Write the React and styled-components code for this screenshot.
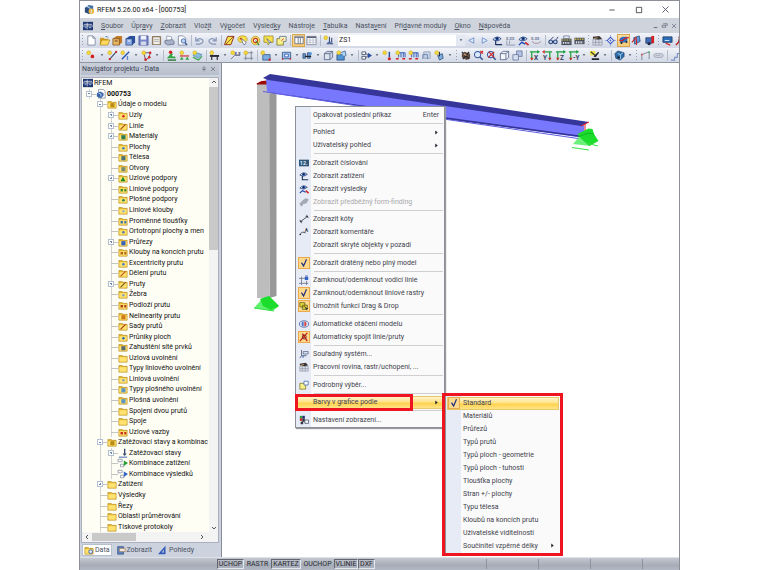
import React from 'react';

import styled, { createGlobalStyle, css } from 'styled-components';

const GlobalStyle = createGlobalStyle`
  * {
    box-sizing: border-box;
  }
  body {
    margin: 0;
    background: #fff;
    font-family: Roboto, "Noto Sans", sans-serif;
    font-size: 7px;
    color: #2b2b33;
  }
  button, select {
    font: inherit;
    color: inherit;
    border: 0;
    padding: 0;
    margin: 0;
    background: none;
  }
  ul {
    list-style: none;
    margin: 0;
    padding: 0;
  }
`;

/* ---------- icons ---------- */

const folder = (
  <>
    <path d="M1 3h4l1 1h5v7H1z" fill="#e3b62c" stroke="#a67c12" strokeWidth=".6" />
    <path d="M1.6 5h8.8v5.4H1.6z" fill="#ffe270" />
  </>
);
const eye = (
  <>
    <path d="M1 5Q5 0 10 4Q6 8 1 5z" fill="#dfe8f6" stroke="#223a72" strokeWidth=".9" />
    <circle cx="5.6" cy="4" r="2" fill="#2a55a8" />
    <circle cx="5.6" cy="4" r=".9" fill="#0c1430" />
  </>
);
const lens = (
  <>
    <circle cx="5" cy="5" r="3.4" fill="#dbe8fa" stroke="#33549a" strokeWidth="1.1" />
    <path d="M7.6 7.6l3 3" stroke="#33549a" strokeWidth="1.6" />
  </>
);
const spark = <circle cx="3" cy="3" r="2.1" fill="#f4d93a" stroke="#c3a11e" strokeWidth=".5" />;
const cube = color => (
  <>
    <path d="M1.5 4l3-2.5h6V8l-3 2.5h-6z" fill={color} />
    <path d="M1.5 4h6v6.5h-6z" fill="#fff" fillOpacity=".35" stroke="#35466e" strokeWidth=".7" />
    <path d="M1.5 4l3-2.5h6V8l-3 2.5M7.5 4l3-2.5" fill="none" stroke="#35466e" strokeWidth=".7" />
  </>
);
const axis = (letter, left) => (
  <>
    <path d={left ? 'M11 2H3M8.5 2v9' : 'M1 2h9M3 2v9'} stroke="#18a03c" strokeWidth="1.3" />
    <path d={left ? 'M3 0v4L0 2z' : 'M9 0v4l3-2z'} fill={left ? '#d42a2a' : '#18a03c'} />
    <path d={left ? 'M6.7 8.5h3.6L8.5 11.5z' : 'M1.2 8.5h3.6L3 11.5z'} fill="#d42a2a" />
    <text x={left ? 1 : 5.5} y="10.5" fontSize="7" fontWeight="700" fill="#333e5c">{letter}</text>
  </>
);

const GLYPHS = {
  app: (
    <>
      <path d="M1 4l4-3 5 1v6l-4 3-5-2z" fill="#4573a8" />
      <path d="M1 4l5 1v6L1 9z" fill="#2c4c7c" />
      <circle cx="8" cy="8" r="3" fill="#eab43b" />
      <path d="M3 2l4 3M8 6v4" stroke="#e7eef8" />
    </>
  ),
  rfem: (
    <>
      <path d="M0 1h12v10H0z" fill="#1c3470" />
      <path d="M0 6h12M5 2v8M1 4h10" stroke="#fff" strokeWidth=".8" />
      <path d="M2 8h2M7 8h3" stroke="#9eb6e8" strokeWidth="1.2" />
    </>
  ),
  doc: (
    <>
      <path d="M2 1h5.5L10 3.5V11H2z" fill="#fff" stroke="#6c7894" strokeWidth=".8" />
      <path d="M7.5 1v2.5H10" fill="none" stroke="#6c7894" strokeWidth=".8" />
    </>
  ),
  model: (
    <>
      <path d="M3 0.5h6L11 3v8H3z" fill="#fff" stroke="#6c7894" strokeWidth=".8" />
      <path d="M1 5l4-2 4 2v3L6 11 1 9z" fill="#3764a6" />
      <path d="M3 5l3 1v3" fill="none" stroke="#d4e2f8" />
    </>
  ),
  open: (
    <>
      <path d="M1 3h4l1 1h4v6H1z" fill="#d49f24" />
      <path d="M3 5.5h9L9.5 11H1z" fill="#ffd85c" stroke="#9a7414" strokeWidth=".6" />
      <path d="M7 2q2-1.5 3 1" fill="none" stroke="#3e6cb0" strokeWidth=".9" />
    </>
  ),
  boxOrange: (
    <>
      <path d="M1 4l4-3h6v7l-3 3H1z" fill="#c07a28" />
      <path d="M1 4h7v7H1z" fill="#e9b565" stroke="#6e4210" strokeWidth=".7" />
      <path d="M3 6.5h3" stroke="#5f390d" />
    </>
  ),
  boxBlue: (
    <>
      <path d="M1 4l4-3h6v7l-3 3H1z" fill="#2a4f9e" />
      <path d="M1 4h7v7H1z" fill="#86a9e4" stroke="#1c3470" strokeWidth=".7" />
      <path d="M3 6.5h3" stroke="#fff" />
    </>
  ),
  save: (
    <>
      <path d="M1 1h10v10H1z" fill="#7684c8" stroke="#3b4890" strokeWidth=".7" />
      <path d="M3 1h6v4H3z" fill="#f0f3fc" />
      <path d="M3 7h6v4H3z" fill="#d2d6ea" />
    </>
  ),
  clip: (
    <>
      <rect x="1" y="1" width="10" height="10" rx="1" fill="#8f7b62" />
      <path d="M2.5 2.5h7v7.5h-7z" fill="#f2f0ea" />
      <path d="M3.5 5h5M3.5 7h5" stroke="#8e8e8e" strokeWidth=".7" />
    </>
  ),
  print: (
    <>
      <path d="M3 1l5 1 1 4H3z" fill="#fff" stroke="#74809c" strokeWidth=".7" />
      <path d="M1 6l8-1 2 2v3l-7 1-3-2z" fill="#a7b1c6" stroke="#566180" strokeWidth=".7" />
    </>
  ),
  preview: (
    <>
      <path d="M1.5 1H7l2.5 2.5V11h-8z" fill="#fff" stroke="#6c7894" strokeWidth=".8" />
      <circle cx="7" cy="6.5" r="2.4" fill="#b8d2f4" stroke="#33549a" strokeWidth=".8" />
      <path d="M8.7 8.5l2.3 2.5" stroke="#33549a" strokeWidth="1.4" />
    </>
  ),
  undo: <path d="M2 2.5v4h4M2.3 6.2Q6 2 9.5 5.5Q11 8.5 6 10H2" fill="none" stroke="#8695b8" strokeWidth="1.3" />,
  redo: <path d="M10 2.5v4H6M9.7 6.2Q6 2 2.5 5.5Q1 8.5 6 10h4" fill="none" stroke="#8695b8" strokeWidth="1.3" />,
  plane: (
    <>
      <path d="M4 1.5h7l-3.5 9h-7z" fill="#f4e34c" stroke="#8a2d1c" strokeWidth="1" />
      <path d="M2 10L10 2" stroke="#8a2d1c" strokeWidth=".8" />
    </>
  ),
  eraser: (
    <>
      <ellipse cx="6" cy="4.5" rx="5" ry="3.6" fill="#f6e04a" stroke="#b08a1c" strokeWidth=".7" />
      <path d="M5 4l5 4-2 3-2-3z" fill="#fff" stroke="#40507c" strokeWidth=".7" />
      <circle cx="4" cy="4" r="1" fill="#cf3226" />
    </>
  ),
  target: (
    <>
      <circle cx="6" cy="6" r="4.6" fill="#f8e45a" stroke="#b08a1c" strokeWidth=".7" />
      <circle cx="6" cy="6" r="2.3" fill="#fff" stroke="#cf3226" strokeWidth="1.2" />
      <path d="M6 6l4 5" stroke="#3b8a35" strokeWidth="1.3" />
    </>
  ),
  note: (
    <>
      <path d="M1 1h10v7H7l-1 3-2-3H1z" fill="#f6e04a" stroke="#867a22" strokeWidth=".7" />
      <path d="M4 4l5 4-2.5.5z" fill="#fff" stroke="#40507c" strokeWidth=".7" />
    </>
  ),
  selectBox: (
    <>
      <path d="M1 4h7v7H1z" fill="#f8ef86" stroke="#6f6820" strokeWidth=".8" />
      <path d="M4 4V1.5h7V7H8" fill="#fff6b4" stroke="#4d6384" strokeWidth=".8" />
      <path d="M6 6l2.5-2" stroke="#cf3226" />
    </>
  ),
  columns: (
    <>
      <path d="M1 1.5h10v9H1z" fill="#fff" stroke="#555e72" strokeWidth=".9" />
      <path d="M1 3h10M5 3v7.5M7.6 3v7.5" stroke="#555e72" strokeWidth=".9" />
    </>
  ),
  grid: (
    <>
      <path d="M1 1.5h10v9H1z" fill="#fff" stroke="#6c7488" strokeWidth=".8" />
      <path d="M1 2.5h10" stroke="#555e72" strokeWidth="1.6" />
      <path d="M1 5.5h10M1 8h10M4.3 3v7.5M7.7 3v7.5" stroke="#a2aabc" strokeWidth=".7" />
    </>
  ),
  loadNew: (
    <>
      {spark}
      <path d="M7 2v6M9.5 3v5M4 9.5h7" stroke="#35446c" strokeWidth="1.1" />
      <path d="M5 8h5" stroke="#2d58b0" strokeWidth="1" />
    </>
  ),
  prev: <path d="M8.5 3L3 6l5.500 3z" fill="#dce8fb" stroke="#6a8bcc" strokeWidth=".9" />,
  next: <path d="M3.500 3L9 6 3.500 9z" fill="#dce8fb" stroke="#6a8bcc" strokeWidth=".9" />,
  viewLoad: (
    <>
      {eye}
      <path d="M4 6v5M4 10.500h7" stroke="#1d3160" strokeWidth="1.3" />
    </>
  ),
  values: (
    <>
      <text x="1" y="5" fontSize="5" fontWeight="700" fill="#75809a">x.xx</text>
      <path d="M2 6v5h9M5 6v4" stroke="#8893ad" strokeWidth=".9" fill="none" />
    </>
  ),
  viewResult: (
    <>
      {eye}
      <path d="M1 11l3-3 4 2" stroke="#1e48b4" strokeWidth="1.4" fill="none" />
      <path d="M8 8l3.500 3" stroke="#d42222" strokeWidth="1.8" />
    </>
  ),
  resultValues: (
    <>
      <text x="0" y="5" fontSize="5" fontWeight="700" fill="#75809a">x.xx</text>
      <path d="M1 7l3 2h4l3-2" stroke="#a98c94" strokeWidth="1" fill="none" />
    </>
  ),
  glasses: (
    <>
      <circle cx="3" cy="7.500" r="2" fill="#bed0ef" stroke="#273d70" strokeWidth="1.2" />
      <circle cx="8" cy="7.500" r="2" fill="#bed0ef" stroke="#273d70" strokeWidth="1.2" />
      <path d="M3 5l3-3M9 5l2-3" stroke="#273d70" />
    </>
  ),
  calc: (
    <>
      <path d="M3 1h6v3H3z" fill="#e8edf8" stroke="#57617c" strokeWidth=".7" />
      <path d="M.5 4h11v7H.5z" fill="#474d5a" />
      <path d="M1 5.500h10" stroke="#e9d44d" strokeWidth="1.2" strokeDasharray="1.600 1" />
      <path d="M2 8.500h8" stroke="#dfe4ee" strokeWidth="2" strokeDasharray="1.500 1" />
    </>
  ),
  calcAll: (
    <>
      <path d="M.5 3h11v7H.5z" fill="#474d5a" />
      <path d="M1 4.500h10" stroke="#e9d44d" strokeWidth="1.2" strokeDasharray="1.600 1" />
      <path d="M2 8h8" stroke="#dfe4ee" strokeWidth="2.400" strokeDasharray="1.500 1" />
    </>
  ),
  table: (
    <>
      <path d="M1 5h10v6H1z" fill="#dadee8" stroke="#777f92" strokeWidth=".6" />
      <path d="M1 8h10M4 5v6M7.500 5v6" stroke="#777f92" strokeWidth=".6" />
      <path d="M1 2l7-1 3 3-4 1-6-1z" fill="#3c3632" />
      <path d="M2 4l4-1" stroke="#caa477" />
    </>
  ),
  snap: (
    <>
      <path d="M6 0v12M0 6h12" stroke="#8b98c0" strokeWidth=".8" />
      <path d="M6 2.500L9.500 6 6 9.500 2.500 6z" fill="#fff" stroke="#3954c6" strokeWidth="1.1" />
      <circle cx="6" cy="6" r="1" fill="#3954c6" />
    </>
  ),
  car: (
    <>
      <path d="M1 4l3-2h6v5l-3 2H1z" fill="#2c6fc0" />
      <path d="M0 6l4 1 3-3 5-1" fill="none" stroke="#d42222" strokeWidth="1.400" />
      <circle cx="3" cy="9.500" r="1.300" fill="#222a40" />
      <circle cx="9" cy="8.500" r="1.300" fill="#222a40" />
    </>
  ),
  carPlane: (
    <>
      <path d="M3 3l6-2 1 6-6 3z" fill="#5d9adb" stroke="#284676" strokeWidth=".8" />
      <path d="M1 8l5-6M6 11V4" stroke="#d42222" strokeWidth="1.200" />
    </>
  ),
  carBox: (
    <>
      <path d="M2 3h7v6H2z" fill="#3f6eb6" stroke="#21345e" strokeWidth=".8" />
      <path d="M8 1h3v8H8z" fill="#d42222" />
      <path d="M4 8h3v3H4z" fill="#222a40" />
    </>
  ),
  screen: (
    <>
      <path d="M1 2h10v6H1z" fill="#2b6eb8" stroke="#1b3158" strokeWidth=".8" />
      <path d="M3 6h5" stroke="#dcebff" />
      <path d="M4 9l5 2" stroke="#d42222" strokeWidth="1.400" />
    </>
  ),
  node: (
    <>
      {spark}
      <circle cx="7" cy="7" r="2" fill="#d42222" />
    </>
  ),
  line: (
    <>
      {spark}
      <path d="M3 10L10 2" stroke="#35446c" strokeWidth="1.100" />
      <circle cx="3" cy="10" r="1.200" fill="#d42222" />
      <circle cx="10" cy="2" r="1.200" fill="#d42222" />
    </>
  ),
  member: (
    <>
      {spark}
      <path d="M2 10L10 2" stroke="#2956b4" strokeWidth="1.600" />
      <text x="7" y="11" fontSize="6" fontWeight="700" fill="#2956b4">I</text>
    </>
  ),
  polygon: (
    <>
      <path d="M3 3h7l-1 5-4 3z" fill="none" stroke="#5c3c4c" strokeWidth=".9" />
      {spark}
      <circle cx="10" cy="3" r="1.400" fill="#d42222" />
      <circle cx="9" cy="8" r="1.400" fill="#d42222" />
      <circle cx="5" cy="10.500" r="1.400" fill="#d42222" />
    </>
  ),
  support: (
    <>
      <path d="M6 3l5 6H1z" fill="#34a546" />
      <path d="M2 11h9" stroke="#1c6b2a" strokeWidth="1.400" />
      <circle cx="5" cy="2.500" r="1.900" fill="#d42222" />
      <circle cx="8" cy="6" r="1.100" fill="#fff" />
    </>
  ),
  supportLine: (
    <>
      {spark}
      <path d="M1 6.500h10" stroke="#d42222" strokeWidth="1.200" />
      <path d="M3 7l2 3.500H1zM9 7l2 3.500H7z" fill="#34a546" />
    </>
  ),
  surface: (
    <>
      <path d="M1 6l4-3 6 2-4 4z" fill="#8bbde2" stroke="#4a7ba8" strokeWidth=".7" />
      <path d="M1 8l6 3 4-4" fill="none" stroke="#34a546" strokeWidth="1.200" />
      {spark}
    </>
  ),
  hinge: (
    <>
      {spark}
      <path d="M1 5.500h10v2H1z" fill="#20242e" />
      <path d="M3 7v4M9 7v4" stroke="#20242e" strokeWidth="1.200" />
    </>
  ),
  dim: (
    <>
      {spark}
      <path d="M1 10l4-4h6" fill="none" stroke="#5d6880" strokeWidth=".9" />
      <text x="5" y="5" fontSize="5" fontWeight="700" fill="#404b66">x.x</text>
    </>
  ),
  gridLines: (
    <>
      <path d="M3 1v10M9 1v10M1 3h10M1 9h10" stroke="#7e8698" strokeWidth="1" />
      {spark}
    </>
  ),
  solid: (
    <>
      <path d="M3 5h8v6H3z" fill="#7baede" stroke="#2d5184" strokeWidth=".8" />
      {spark}
      <circle cx="10.500" cy="10.500" r="1.300" fill="#d42222" />
    </>
  ),
  opening: (
    <>
      <path d="M1.500 2.500h9v7h-9z" fill="#a9c8ea" stroke="#2d5184" strokeWidth=".9" />
      <path d="M4 4.500h4v3H4z" fill="#fff" stroke="#2956b4" strokeWidth=".9" />
      <path d="M1 9h1.500v1.500H1zM9.500 9H11v1.500H9.500z" fill="#d42222" />
    </>
  ),
  coupling: (
    <>
      <path d="M1 4h3v5H1zM6 3h3v6H6z" fill="#6a96cc" stroke="#2d4670" strokeWidth=".8" />
      <path d="M3 7h7" stroke="#20242e" strokeWidth="1.300" />
      <circle cx="9.500" cy="4" r="1.500" fill="#5aa0e0" />
    </>
  ),
  cubeGrey: cube('#ccd6e6'),
  boxPlus: (
    <>
      <path d="M1 5h8v6H1z" fill="#4f94d4" stroke="#24467c" strokeWidth=".8" />
      <path d="M5 3l5-2 1 5-2 1" fill="#aed2f2" stroke="#24467c" strokeWidth=".7" />
      {spark}
    </>
  ),
  combo: (
    <>
      <path d="M1 2h4v3H1zM1 7h4v3H1z" fill="#fff" stroke="#404b66" strokeWidth=".9" />
      <path d="M5 3.500l3 2.500-3 2.500" fill="none" stroke="#404b66" />
      <path d="M7.500 3L12 6 7.500 9z" fill="#2a4f9e" />
    </>
  ),
  loadNode: (
    <>
      {spark}
      <path d="M8 2v6" stroke="#2a4f9e" strokeWidth="1.600" />
      <circle cx="8" cy="9.500" r="1.700" fill="#d42222" />
    </>
  ),
  loadLine: (
    <>
      <path d="M2 3h9v5M4 3v5M6.500 3v5M9 3v5" fill="none" stroke="#2956b4" strokeWidth="1" />
      <path d="M1 9.500h10" stroke="#d42222" strokeWidth="1.500" strokeDasharray="3 4" />
      {spark}
    </>
  ),
  loadGen: (
    <>
      <path d="M3 2h7v7H3z" fill="#c7d4e6" stroke="#8896b0" strokeWidth=".8" />
      <path d="M2 10V5h5v5" fill="none" stroke="#6883b4" />
    </>
  ),
  loadFree: (
    <>
      {spark}
      <path d="M4 6l5-2 1 5-4 2z" fill="#7badde" stroke="#2b4776" strokeWidth=".8" />
      <path d="M6 2v5" stroke="#20242e" />
    </>
  ),
  hand: (
    <>
      <path d="M2 4l3-2 6 2v5l-4 2-5-3z" fill="#62493c" />
      <path d="M2 2l8 8M10 2L3 10" stroke="#20242e" strokeWidth="1.100" />
      <path d="M4 4l3 2" stroke="#dba67c" strokeWidth="1.300" />
    </>
  ),
  zoomWin: (
    <>
      {lens}
      <path d="M8 1l3 3M11 1L8 4" stroke="#d42222" strokeWidth="1.200" />
    </>
  ),
  zoomCross: (
    <>
      {lens}
      <path d="M2.500 8L9 2M3 2l6 6" stroke="#d42222" strokeWidth="1.300" />
    </>
  ),
  cubeWire: cube('#eef2fa'),
  cubes: (
    <>
      <path d="M5 1h6v6H5z" fill="#b7c3e0" stroke="#5f6e98" strokeWidth=".8" />
      <path d="M1 5h6v6H1z" fill="#d8dff0" stroke="#5f6e98" strokeWidth=".8" />
    </>
  ),
  axisX: axis('X'),
  axisY: axis('Y', true),
  axisZ: axis('Z'),
  axisMinusY: axis('-Y'),
  render: (
    <>
      <path d="M1 1h6v5H1z" fill="#f4e34c" />
      <path d="M3 9h8v2H3zM5 7l5-5 1 1-4 5z" fill="#20242e" />
      <path d="M2 2l6 5" stroke="#20242e" strokeWidth="1.300" />
    </>
  ),
  solidBlue: (
    <>
      <path d="M1 4l3-3 7 2v4l-4 4-5-2z" fill="#2f6ca8" stroke="#193a64" strokeWidth=".7" />
      <path d="M4 4l3 1 3-2M7 5v5" fill="none" stroke="#9fd0f2" />
      <circle cx="5" cy="8" r="1.300" fill="#123" />
    </>
  ),
  frame: (
    <>
      <path d="M2 11V5l8-3v8" fill="none" stroke="#7c8698" strokeWidth="1" />
      <circle cx="2" cy="5" r="1.100" fill="#d06060" />
      <circle cx="10" cy="2.500" r="1.100" fill="#58b070" />
    </>
  ),
  brick: (
    <>
      <rect x="1" y="4" width="10" height="4" rx="2" fill="#d6d9e2" stroke="#8a92a6" strokeWidth=".8" />
      <path d="M3 6h6" stroke="#8a92a6" strokeDasharray="1 1" />
    </>
  ),
  stairs: <path d="M1 11h4V8h3V4h3" fill="none" stroke="#7d93c8" strokeWidth="1.200" />,
  numbering: (
    <>
      <path d="M0 2h12v8H0z" fill="#2f5578" />
      <text x="1" y="8.500" fontSize="6.500" fontWeight="700" fill="#dff0ff">12.</text>
    </>
  ),
  formFinding: <path d="M1 8l4-4 3-2 3 1-2 4-4 1-2 3z" fill="#a5abb8" stroke="#8a909e" strokeWidth=".7" />,
  dims: (
    <>
      <path d="M2 9l8-6" stroke="#333a4c" strokeWidth="1" />
      <path d="M1 7l2 4M9 1l2 4M4 9l-3 0M8 3h3" stroke="#333a4c" strokeWidth="1" />
    </>
  ),
  comments: (
    <>
      <path d="M1 9l3-3 4 1" fill="none" stroke="#333a4c" strokeWidth="1" />
      <circle cx="1.500" cy="9" r="1" fill="#333a4c" />
      <text x="7" y="6.500" fontSize="6" fontWeight="700" fill="#333a4c">A</text>
    </>
  ),
  check: <path d="M3 5.500l2.500 4L9 1.500" fill="none" stroke="#1b2a80" strokeWidth="1.400" />,
  guides: (
    <>
      <path d="M3 2v10M0 4h8M0 10h11M9 7v5" stroke="#6d7688" strokeWidth="1" />
      <path d="M7 2h4v4H7z" fill="#2f64c4" />
      <path d="M8 2V.8h2V2" fill="none" stroke="#5f6e98" strokeWidth=".8" />
    </>
  ),
  drag: (
    <>
      <path d="M1 2h6v5H1zM4 5h6v5H4z" fill="#e8dc3c" stroke="#5d5514" strokeWidth=".9" />
      <path d="M7 7l4 2-1.500.8L8.500 11z" fill="#30343e" />
    </>
  ),
  rotate: (
    <>
      <ellipse cx="6" cy="6" rx="5.500" ry="3.800" fill="#e7eefa" stroke="#5272ac" strokeWidth="1.100" />
      <path d="M6 3c2 0 3 1.500 3 3s-1 3-3 3z" fill="#d23a3a" />
      <path d="M6 3c-2 0-3 1.500-3 3s1 3 3 3z" fill="#4a74c0" />
      <path d="M6 3v6" stroke="#fff" strokeWidth=".8" />
    </>
  ),
  connect: (
    <>
      <path d="M1 11L10 1M4 2l6 9" stroke="#c01c1c" strokeWidth="1.500" />
      <circle cx="6.300" cy="6" r="2.400" fill="none" stroke="#70201c" strokeWidth="1" />
    </>
  ),
  coords: (
    <>
      <path d="M3 1v7h6M3 8l-2 3" stroke="#4a5878" strokeWidth="1" fill="none" />
      <path d="M5 3h6v3H5z" fill="#d6e0f2" stroke="#4a5878" strokeWidth=".8" />
      <circle cx="5" cy="9.500" r="1.300" fill="#7b95cc" />
    </>
  ),
  detailSelect: (
    <>
      <path d="M1 4h7v7H1z" fill="#f8ef86" stroke="#6f6820" strokeWidth=".8" />
      <path d="M6 1.500h5V6H6z" fill="#fff" stroke="#3e62a8" strokeWidth=".9" />
    </>
  ),
  settings: (
    <>
      <path d="M1 1h3v3H1z" fill="#2d9c38" />
      <path d="M4 1h3v3H4z" fill="#1b2a80" />
      <path d="M1 4h3v3H1z" fill="#c82222" />
      <path d="M4 4h3v4H4zM2 8h3v3H2z" fill="#30343e" />
      <path d="M7 6h4.500v4H7z" fill="#fff" stroke="#404b66" strokeWidth=".9" />
    </>
  ),
  loadCase: (
    <>
      <path d="M8 1v6" stroke="#35446c" strokeWidth="1.600" />
      <path d="M5.500 6.500h5L8 9.500z" fill="#35446c" />
      <path d="M1 11h10" stroke="#4468b0" strokeWidth="1.200" />
    </>
  ),
  comboGreen: (
    <>
      <path d="M0 1.500h5v3H0zM3 7.500h4v3H3z" fill="#fff" stroke="#747d90" strokeWidth=".8" />
      <path d="M7 3L12 6 7 9.500z" fill="#22a032" />
    </>
  ),
  comboBlue: (
    <>
      <path d="M0 1.500h5v3H0zM3 7.500h4v3H3z" fill="#fff" stroke="#747d90" strokeWidth=".8" />
      <path d="M7 3L12 6 7 9.500z" fill="#2f64c4" />
    </>
  ),
  tabData: (
    <>
      {folder}
      <circle cx="8" cy="8" r="2.300" fill="#dbe8fa" stroke="#33549a" strokeWidth="1" />
    </>
  ),
  tabShow: (
    <>
      <path d="M2 2h7v9H2z" fill="#5f86c4" stroke="#2c4878" strokeWidth=".8" />
      <path d="M4 4h7v4H4z" fill="#f1e9dc" stroke="#8f6442" strokeWidth=".7" />
    </>
  ),
  tabViews: <path d="M0 11L9 1v10zM4.500 9H7V5.500z" fill="#3159b8" fillRule="evenodd" />,
  pin: <path d="M4 2h4v5H4zM3 7h6M6 7v4" fill="none" stroke="#5a6172" strokeWidth="1" />,
  close: <path d="M2 2l8 8M10 2l-8 8" stroke="#50576a" strokeWidth="1.200" />,
  minimize: <path d="M2 6h8" stroke="#333" strokeWidth="1.200" />,
  maximize: <path d="M2 2h8v8H2z" fill="none" stroke="#333" strokeWidth="1.200" />,
  mdiMin: <path d="M3 9.500h6" stroke="#50576a" strokeWidth="1.400" />,
  mdiRestore: <path d="M2 5.500h6v3.500H2zM4 3h6.500v4" fill="none" stroke="#50576a" strokeWidth="1.100" />,
  arrowUp: <path d="M2 8l4-4 4 4" fill="none" stroke="#444" strokeWidth="1.800" />,
  arrowDown: <path d="M2 4l4 4 4-4" fill="none" stroke="#444" strokeWidth="1.800" />,
  arrowLeft: <path d="M8 2L4 6l4 4" fill="none" stroke="#444" strokeWidth="1.800" />,
  arrowRight: <path d="M4 2l4 4-4 4" fill="none" stroke="#444" strokeWidth="1.800" />,
  triDown: <path d="M2 4h8L6 9z" fill="#4a5264" />,
  triRight: <path d="M3 1l6 5-6 5z" fill="#20242e" />,
};

const Svg = styled.svg`
  display: block;
  flex: none;
  overflow: visible;
`;

const Icon = ({ name, size = 12 }) => (
  <Svg width={size} height={size} viewBox="0 0 12 12" aria-hidden="true">{GLYPHS[name]}</Svg>
);

// folder with an optional coloured mark on it
const FolderIcon = ({ mark, shape = 'dot' }) => (
  <Svg width="10" height="10" viewBox="0 0 12 12" aria-hidden="true">
    {folder}
    {mark && shape === 'dot' && <circle cx="6.500" cy="7.500" r="1.500" fill={mark} />}
    {mark && shape === 'slash' && <path d="M3 10l6-6" stroke={mark} strokeWidth="1.500" />}
    {mark && shape === 'box' && <path d="M4 5h5v5H4z" fill={mark} />}
    {mark && shape === 'tri' && <path d="M6 4.500l3 5.500H3z" fill={mark} />}
    {mark && shape === 'pair' && <path d="M3 6h3v3H3zM7.500 6h2.500v3H7.500z" fill={mark} />}
  </Svg>
);

/* ---------- window ---------- */

const Page = styled.div`
  display: flex;
  height: 100vh;
  min-height: 560px;
  padding: 0 80px 0 79px;
`;
const Window = styled.div`
  flex: 1;
  min-width: 0;
  display: flex;
  flex-direction: column;
  overflow: hidden;
  background: #cdd3de;
  border: 1px solid #8c8f96;
  border-bottom: 0;
`;
const TitleBar = styled.header`
  flex: none;
  display: flex;
  align-items: center;
  gap: 2px;
  height: 17px;
  padding: 0 1px 0 4px;
  background: #fff;
  color: #111;
`;
const Title = styled.h1`
  flex: 1;
  margin: 0;
  font-size: 7px;
  font-weight: 400;
`;
const IconButton = styled.button`
  display: flex;
  align-items: center;
  justify-content: center;
  width: ${p => p.$width || 12}px;
  height: 12px;
`;
const MenuBar = styled.nav`
  flex: none;
  display: flex;
  align-items: center;
  height: 15px;
  padding-left: 3px;
  background: #ced3dc;
  color: #4a5262;
`;
const MenuBarItem = styled.button`
  height: 13px;
  margin-left: 8px;
  white-space: nowrap;
`;
const Spacer = styled.div`
  flex: 1;
`;
const Bar = styled.div`
  flex: none;
  display: flex;
  align-items: center;
  height: 15px;
  background: linear-gradient(#f2f4f9, #dde2ec 60%, #d3d9e6);
  border-bottom: 1px solid ${p => (p.$last ? '#8f959f' : '#d3d9e6')};
  overflow: hidden;
`;
const Tool = styled.button`
  flex: none;
  display: flex;
  align-items: center;
  justify-content: center;
  width: 13px;
  height: 13px;
  ${p => p.$on && css`
    background: linear-gradient(#fde2a8, #fbc972);
    box-shadow: inset 0 0 0 1px #d9a650;
  `}
`;
const Drop = styled.button`
  flex: none;
  display: flex;
  align-items: center;
  justify-content: center;
  width: 8px;
  height: 13px;
`;
const Divider = styled.span`
  flex: none;
  width: 4px;
  height: 11px;
  background: linear-gradient(#b4bccb, #b4bccb) center / 1px 100% no-repeat;
`;
const Grip = styled.span`
  flex: none;
  width: 5px;
  height: 10px;
  background: repeating-linear-gradient(#98a0b2 0 1px, transparent 1px 3px) center / 1px 100% no-repeat;
`;
const Combo = styled.span`
  flex: none;
  display: flex;
  align-items: center;
  width: 130px;
  height: 11px;
  padding-right: 2px;
  background: linear-gradient(90deg, transparent 3px, #fff 3px 121px, #e4e8f0 121px);
`;
const Select = styled.select`
  flex: 1;
  height: 11px;
  padding-left: 4px;
  color: #2a1c28;
  appearance: none;
  outline: none;
`;
const Body = styled.main`
  flex: 1;
  min-height: 0;
  display: flex;
`;

/* ---------- navigator ---------- */

const Navigator = styled.aside`
  flex: none;
  display: flex;
  flex-direction: column;
  width: 139px;
  padding-left: 1px;
`;
const NavHeader = styled.div`
  flex: none;
  display: flex;
  align-items: center;
  height: 12px;
  padding: 0 2px 0 1px;
  background: linear-gradient(#c9cfda, #b8bfcc);
  color: #3c4456;
`;
const TreeBox = styled.div`
  flex: 1;
  min-height: 0;
  display: flex;
  margin-top: 2px;
  border: 1px solid #aab1bd;
  border-bottom: 0;
  background: #fffef5;
`;
const Tree = styled.ul`
  flex: 1;
  min-width: 0;
  display: grid;
  grid-auto-rows: 1fr;
  overflow: hidden;
  color: #111;
`;
const line = depth => `linear-gradient(#d3d3cf, #d3d3cf) ${depth * 11 - 4}px 0 / 1px 100% no-repeat`;
const TreeRow = styled.li`
  display: flex;
  align-items: center;
  min-height: 0;
  padding-left: ${p => p.$depth * 11 || 1}px;
  font-weight: ${p => (p.$bold ? 700 : 400)};
  white-space: nowrap;
  background: ${p => (p.$depth === 3 ? `${line(2)}, ${line(3)}` : line(p.$depth))};
`;
const Branch = styled.span`
  flex: none;
  display: flex;
  align-items: center;
  width: 10px;
  height: 6px;
  margin-left: -7px;
  background: linear-gradient(#c4c4c0, #c4c4c0) 3px 3px / 7px 1px no-repeat;
`;
const Toggle = styled.button`
  display: block;
  width: 6px;
  height: 6px;
  border: 1px solid #b4c0d2;
  background:
    linear-gradient(#6c86b4, #6c86b4) center / 2px 1px no-repeat,
    ${p => (p.$open ? '' : 'linear-gradient(#6c86b4, #6c86b4) center / 1px 2px no-repeat,')}
    linear-gradient(#fff, #fff);
`;
const TreeLabel = styled.span`
  margin-left: 1px;
`;
const ScrollY = styled.div`
  flex: none;
  display: flex;
  flex-direction: column;
  align-items: center;
  gap: 2px;
  width: 9px;
  padding: 1px 0;
  background: #f3f3f3;
`;
const ThumbY = styled.span`
  width: 9px;
  height: 163px;
  background: #c9c9c9;
`;
const ScrollX = styled.div`
  flex: none;
  display: flex;
  align-items: center;
  height: 11px;
  padding: 0 13px 0 2px;
  border: 1px solid #aab1bd;
  border-top: 0;
  background: #f3f3f3;
`;
const ThumbX = styled.span`
  width: 44px;
  height: 8px;
  margin-left: 2px;
  background: #c9c9c9;
`;
const Tabs = styled.div`
  flex: none;
  display: flex;
  height: 14px;
  padding: 1px 0 1px 1px;
  gap: 2px;
`;
const Tab = styled.button`
  display: flex;
  align-items: center;
  gap: 1px;
  padding: 0 2px;
  color: #4a5262;
  ${p => p.$active && css`
    background: #fff;
    box-shadow: inset 0 0 0 1px #b8bfcc;
  `}
`;

/* ---------- work area ---------- */

const Viewport = styled.section`
  position: relative;
  flex: 1;
  min-width: 0;
  margin-left: 2px;
  border-left: 1px solid #868c98;
  background: #fff;
  overflow: hidden;
`;
const StatusBar = styled.footer`
  flex: none;
  display: flex;
  align-items: stretch;
  height: 13px;
  padding: 1px 0 1px 137px;
  border-top: 1px solid #dde1e8;
  background: linear-gradient(#c3c8d1, #a6acb7 60%, #b3b9c4);
`;
const Mode = styled.button`
  display: flex;
  align-items: center;
  justify-content: center;
  width: ${p => p.$width}px;
  white-space: nowrap;
  border: 1px solid;
  border-color: ${p => (p.$on ? 'transparent' : '#62666e #e4e7ec #e4e7ec #62666e')};
`;
const Pane = styled.span`
  width: ${p => (p.$last ? 37 : 52)}px;
  border-left: 1px solid #8c929e;
`;

/* ---------- context menu ---------- */

const Popup = styled.div`
  position: absolute;
  display: flex;
  flex-direction: column;
  padding: 1px;
  border: 1px solid #8b8f96;
  background: linear-gradient(90deg, #e6ebf5 15px, #fafafa 15px);
  box-shadow: 1px 1px 1px #9a9a9a;
  color: #3e424c;
`;
const ContextMenu = styled(Popup)`
  left: 73px;
  top: 43px;
  width: 150px;
  height: 322px;
`;
const SubMenu = styled(Popup)`
  left: 223px;
  top: 332px;
  width: 116px;
  height: 159px;
`;
const Item = styled.button`
  flex: ${p => (p.$fill ? '1' : '0 0 13px')};
  min-height: 0;
  display: flex;
  align-items: center;
  gap: 3px;
  padding: 0 4px 0 1px;
  text-align: left;
  white-space: nowrap;
  color: ${p => (p.disabled ? '#a8a8aa' : 'inherit')};
  ${p => p.$hot && css`
    background: linear-gradient(#fff8d8, #ffe38a 45%, #ffd24e 55%, #ffe892);
    box-shadow: inset 0 0 0 1px #e8c768;
  `}
`;
const ItemIcon = styled.span`
  flex: none;
  display: flex;
  align-items: center;
  justify-content: center;
  width: 12px;
  height: 12px;
  ${p => p.$on && css`
    background: #fcd98c;
    box-shadow: inset 0 0 0 1px #eda84a;
  `}
`;
const ItemText = styled.span`
  flex: 1;
`;
const Rule = styled.div`
  flex: 1;
  margin-left: 17px;
  background: linear-gradient(#cfcfd1, #cfcfd1) 0 50% / 100% 1px no-repeat;
`;
const Marker = styled.div`
  position: absolute;
  left: ${p => p.$x}px;
  top: ${p => p.$y}px;
  width: ${p => p.$w}px;
  height: ${p => p.$h}px;
  border: 3px solid #ee1420;
  pointer-events: none;
`;

/* ---------- data ---------- */

const MENUS = [
  ['', 'S', 'oubor'], ['Úpr', 'a', 'vy'], ['', 'Z', 'obrazit'], ['Vlož', 'i', 't'], ['Vý', 'p', 'očet'],
  ['Výsled', 'k', 'y'], ['Nástro', 'j', 'e'], ['', 'T', 'abulka'], ['Nasta', 'v', 'ení'],
  ['Pří', 'd', 'avné moduly'], ['', 'O', 'kno'], ['', 'N', 'ápověda'],
];

// "|" divider, ":" grip, "v" drop arrow, "*" prefix marks a pressed tool
const TOOLS_MAIN = [
  ':', 'doc', 'open', 'boxOrange', 'boxBlue', 'save', 'clip', 'print', 'preview', '|', 'undo', 'redo', '|',
  'plane', 'eraser', 'target', 'note', 'selectBox', '|', '*columns', 'grid', '|', 'loadNew', 'COMBO',
  'prev', 'next', 'viewLoad', 'values', 'viewResult', 'resultValues', '|', 'glasses', 'calc', 'calcAll', ':',
  'table', 'snap', '*car', 'carPlane', 'carBox', ':', 'screen', 'connect',
];
const TOOLS_MODEL = [
  ':', 'node', 'v', 'line', 'member', 'v', 'polygon', 'v', '|', 'support', 'supportLine', 'surface', '|',
  'hinge', 'v', 'dim', 'gridLines', '|', 'solid', 'v', 'opening', 'v', 'coupling', 'v', 'cubeGrey', 'boxPlus', 'v',
  '|', 'combo', 'v', 'loadNode', 'loadLine', 'loadLine', 'loadGen', 'loadFree', 'v', ':', 'hand', 'zoomWin',
  'zoomCross', 'cubeWire', 'cubes', '|', 'axisX', 'axisY', 'axisZ', 'axisMinusY', 'v', 'render', 'v', '|',
  'solidBlue', 'v', ':', 'frame', 'brick', '|', 'stairs',
];

const TREE = [
  { text: 'RFEM', depth: 0, icon: 'rfem' },
  { text: '000753', depth: 1, icon: 'model', bold: true, open: true },
  { text: 'Údaje o modelu', depth: 2, open: true, mark: '#b98b14', shape: 'box' },
  { text: 'Uzly', depth: 3, closed: true, mark: '#d42222' },
  { text: 'Linie', depth: 3, closed: true, mark: '#b04a14', shape: 'slash' },
  { text: 'Materiály', depth: 3, closed: true, mark: '#2f7c58', shape: 'box' },
  { text: 'Plochy', depth: 3, mark: '#3d7cc8' },
  { text: 'Tělesa', depth: 3, mark: '#4a7078', shape: 'box' },
  { text: 'Otvory', depth: 3, mark: '#7b8a74', shape: 'box' },
  { text: 'Uzlové podpory', depth: 3, closed: true, mark: '#1c8a2c', shape: 'tri' },
  { text: 'Liniové podpory', depth: 3, mark: '#4c8c28', shape: 'pair' },
  { text: 'Plošné podpory', depth: 3, mark: '#1c7a4c' },
  { text: 'Liniové klouby', depth: 3, mark: '#9cb4c4' },
  { text: 'Proměnné tloušťky', depth: 3, mark: '#4a78a8', shape: 'pair' },
  { text: 'Ortotropní plochy a men', depth: 3, mark: '#4a78a8' },
  { text: 'Průřezy', depth: 3, closed: true, mark: '#3561c0', shape: 'box' },
  { text: 'Klouby na koncích prutu', depth: 3, mark: '#b5641c', shape: 'pair' },
  { text: 'Excentricity prutu', depth: 3, mark: '#3d7cc8' },
  { text: 'Dělení prutu', depth: 3, mark: '#c05a1c', shape: 'slash' },
  { text: 'Pruty', depth: 3, closed: true, mark: '#7c5a2c', shape: 'slash' },
  { text: 'Žebra', depth: 3, mark: '#88a4c4' },
  { text: 'Podloží prutu', depth: 3, mark: '#b0401c', shape: 'pair' },
  { text: 'Nelinearity prutu', depth: 3, mark: '#d07818', shape: 'box' },
  { text: 'Sady prutů', depth: 3, mark: '#b03a1c', shape: 'slash' },
  { text: 'Průniky ploch', depth: 3, mark: '#2668c0' },
  { text: 'Zahuštění sítě prvků', depth: 3, mark: '#5c6c70', shape: 'box' },
  { text: 'Uzlová uvolnění', depth: 3 },
  { text: 'Typy liniového uvolnění', depth: 3 },
  { text: 'Liniová uvolnění', depth: 3, mark: '#88a4c4' },
  { text: 'Typy plošného uvolnění', depth: 3, mark: '#5c94c4', shape: 'box' },
  { text: 'Plošná uvolnění', depth: 3, mark: '#5c94c4', shape: 'box' },
  { text: 'Spojení dvou prutů', depth: 3 },
  { text: 'Spoje', depth: 3 },
  { text: 'Uzlové vazby', depth: 3, mark: '#c8321c', shape: 'pair' },
  { text: 'Zatěžovací stavy a kombinac', depth: 2, open: true, mark: '#b98b14', shape: 'box' },
  { text: 'Zatěžovací stavy', depth: 3, closed: true, icon: 'loadCase' },
  { text: 'Kombinace zatížení', depth: 3, icon: 'comboGreen' },
  { text: 'Kombinace výsledků', depth: 3, icon: 'comboBlue' },
  { text: 'Zatížení', depth: 2, closed: true },
  { text: 'Výsledky', depth: 2 },
  { text: 'Řezy', depth: 2 },
  { text: 'Oblasti průměrování', depth: 2 },
  { text: 'Tiskové protokoly', depth: 2 },
];

const CONTEXT = [
  { text: 'Opakovat poslední příkaz', hint: 'Enter' },
  null,
  { text: 'Pohled', sub: true },
  { text: 'Uživatelský pohled', sub: true },
  null,
  { text: 'Zobrazit číslování', icon: 'numbering' },
  { text: 'Zobrazit zatížení', icon: 'viewLoad' },
  { text: 'Zobrazit výsledky', icon: 'viewResult' },
  { text: 'Zobrazit předběžný form-finding', icon: 'formFinding', disabled: true },
  null,
  { text: 'Zobrazit kóty', icon: 'dims' },
  { text: 'Zobrazit komentáře', icon: 'comments' },
  { text: 'Zobrazit skryté objekty v pozadí' },
  null,
  { text: 'Zobrazit drátěný nebo plný model', icon: 'check', on: true },
  null,
  { text: 'Zamknout/odemknout vodicí linie', icon: 'guides' },
  { text: 'Zamknout/odemknout liniové rastry', icon: 'check', on: true },
  { text: 'Umožnit funkci Drag & Drop', icon: 'drag', on: true },
  null,
  { text: 'Automatické otáčení modelu', icon: 'rotate' },
  { text: 'Automaticky spojit linie/pruty', icon: 'connect', on: true },
  null,
  { text: 'Souřadný systém...', icon: 'coords' },
  { text: 'Pracovní rovina, rastr/uchopení, ...', icon: 'table' },
  null,
  { text: 'Podrobný výběr...', icon: 'detailSelect' },
  null,
  { text: 'Barvy v grafice podle', sub: true, hot: true },
  null,
  { text: 'Nastavení zobrazení...', icon: 'settings' },
];

const COLORS_BY = [
  { text: 'Standard', icon: 'check', on: true, hot: true },
  { text: 'Materiálů' },
  { text: 'Průřezů' },
  { text: 'Typů prutů' },
  { text: 'Typů ploch - geometrie' },
  { text: 'Typů ploch - tuhosti' },
  { text: 'Tloušťka plochy' },
  { text: 'Stran +/- plochy' },
  { text: 'Typu tělesa' },
  { text: 'Kloubů na koncích prutu' },
  { text: 'Uživatelské viditelnosti' },
  { text: 'Součinitel vzpěrné délky', sub: true },
];

const MODES = [
  { text: 'UCHOP', width: 27 },
  { text: 'RASTR', width: 27, on: true },
  { text: 'KARTEZ', width: 30 },
  { text: 'OUCHOP', width: 33, on: true },
  { text: 'VLINIE', width: 24 },
  { text: 'DXF', width: 17 },
];

/* ---------- parts ---------- */

const ToolRow = ({ tools, last }) => (
  <Bar $last={last} role="toolbar">
    {tools.map((tool, i) => {
      if (tool === '|') return <Divider key={i} />;
      if (tool === ':') return <Grip key={i} />;
      if (tool === 'v') return <Drop key={i}><Icon name="triDown" size={4} /></Drop>;
      if (tool === 'COMBO') {
        return (
          <Combo key={i}>
            <Select aria-label="ZS" defaultValue="ZS1"><option>ZS1</option></Select>
            <Icon name="triDown" size={4} />
          </Combo>
        );
      }
      const on = tool[0] === '*';
      return <Tool key={i} $on={on}><Icon name={on ? tool.slice(1) : tool} size={on ? 10 : 11} /></Tool>;
    })}
  </Bar>
);

const MenuItem = ({ item, fill }) => (
  <Item role="menuitem" $hot={item.hot} $fill={fill} disabled={item.disabled}>
    <ItemIcon $on={item.on}>{item.icon && <Icon name={item.icon} size={10} />}</ItemIcon>
    <ItemText>{item.text}</ItemText>
    {item.hint && <span>{item.hint}</span>}
    {item.sub && <Icon name="triRight" size={5} />}
  </Item>
);

const Model = () => (
  <Svg width="456" height="492" viewBox="222 64 456 492" aria-hidden="true">
    <path d="M269 92h7.500v205l-7 2z" fill="#999" />
    <path d="M257 85h15v9l-2.500 1v204H257z" fill="#bdbdbd" />
    <path d="M256.500 84.500l5-2.500 6-.5 1 1.500 3.500 1v1.500h-15z" fill="#9c0808" />
    <path d="M266 80L584 126v13L276 95l-9-2.500z" fill="#7878ff" />
    <path d="M263 79l7-4 319 48-8 4L268 81z" fill="#36369a" />
    <path d="M263 92.200L440 117.500 580 136.500v1.500L440 119.500z" fill="#333399" />
    <path d="M263 92.500L440 119.500 578 139.500" fill="none" stroke="#5f5fe0" strokeWidth="1" />
    <path d="M581 127l8-4M585 125v13" stroke="#e01818" strokeWidth="1" fill="none" />
    <path d="M573 145l7-8 12 4-2 6z" fill="#6cf07c" />
    <path d="M577.500 135l11-5.500 4 .5 1.500 5 4.500 7-9 5-8-7z" fill="#1cdc2c" />
    <path d="M578 138l10-4 6 1" stroke="#0fb81e" fill="none" />
    <path d="M572 148.500l17 2.500M586 144l12 3" stroke="#34e044" strokeWidth="1" />
    <path d="M254 309l9-10 6-2 10 10-6 5z" fill="#5cf06c" />
    <path d="M260 300l9-3 4 4 6 6-8 4-8-4z" fill="#1cdc2c" />
    <path d="M254 309l20 3" stroke="#34e044" strokeWidth="1" />
  </Svg>
);

export default function App() {
  return (
    <>
      <GlobalStyle />
      <Page>
        <Window>
          <TitleBar>
            <Icon name="app" size={11} />
            <Title>RFEM 5.26.00 x64 - [000753]</Title>
            <IconButton $width={25} aria-label="Minimalizovat"><Icon name="minimize" size={8} /></IconButton>
            <IconButton $width={25} aria-label="Maximalizovat"><Icon name="maximize" size={8} /></IconButton>
            <IconButton $width={25} aria-label="Zavřít"><Icon name="close" size={9} /></IconButton>
          </TitleBar>
          <MenuBar>
            <Icon name="rfem" size={10} />
            {MENUS.map(([before, key, after]) => (
              <MenuBarItem key={before + key}>{before}<u>{key}</u>{after}</MenuBarItem>
            ))}
            <Spacer />
            <IconButton $width={9}><Icon name="mdiMin" size={7} /></IconButton>
            <IconButton $width={9}><Icon name="mdiRestore" size={7} /></IconButton>
            <IconButton $width={10}><Icon name="close" size={6} /></IconButton>
          </MenuBar>
          <ToolRow tools={TOOLS_MAIN} />
          <ToolRow tools={TOOLS_MODEL} last />
          <Body>
            <Navigator>
              <NavHeader>
                <span>Navigátor projektu - Data</span>
                <Spacer />
                <IconButton $width={9}><Icon name="pin" size={6} /></IconButton>
                <IconButton $width={9}><Icon name="close" size={6} /></IconButton>
              </NavHeader>
              <TreeBox>
                <Tree role="tree">
                  {TREE.map(row => (
                    <TreeRow key={row.text} role="treeitem" $depth={row.depth} $bold={row.bold}>
                      {row.depth > 0 && (
                        <Branch>{(row.open || row.closed) && <Toggle $open={row.open} />}</Branch>
                      )}
                      {row.icon
                        ? <Icon name={row.icon} size={10} />
                        : <FolderIcon mark={row.mark} shape={row.shape} />}
                      <TreeLabel>{row.text}</TreeLabel>
                    </TreeRow>
                  ))}
                </Tree>
                <ScrollY>
                  <Icon name="arrowUp" size={6} />
                  <ThumbY />
                  <Spacer />
                  <Icon name="arrowDown" size={6} />
                </ScrollY>
              </TreeBox>
              <ScrollX>
                <Icon name="arrowLeft" size={6} />
                <ThumbX />
                <Spacer />
                <Icon name="arrowRight" size={6} />
              </ScrollX>
              <Tabs role="tablist">
                <Tab role="tab" $active><Icon name="tabData" size={10} />Data</Tab>
                <Tab role="tab"><Icon name="tabShow" size={10} />Zobrazit</Tab>
                <Tab role="tab"><Icon name="tabViews" size={10} />Pohledy</Tab>
              </Tabs>
            </Navigator>
            <Viewport>
              <Model />
              <ContextMenu role="menu">
                {CONTEXT.map((item, i) => (item ? <MenuItem key={i} item={item} /> : <Rule key={i} />))}
              </ContextMenu>
              <SubMenu role="menu">
                {COLORS_BY.map(item => <MenuItem key={item.text} item={item} fill />)}
              </SubMenu>
              <Marker $x={73} $y={331} $w={118} $h={17} />
              <Marker $x={220} $y={330} $w={121} $h={163} />
            </Viewport>
          </Body>
          <StatusBar>
            {MODES.map(mode => (
              <Mode key={mode.text} $width={mode.width} $on={mode.on}>{mode.text}</Mode>
            ))}
            <Spacer />
            <Pane />
            <Pane />
            <Pane />
            <Pane $last />
          </StatusBar>
        </Window>
      </Page>
    </>
  );
}
